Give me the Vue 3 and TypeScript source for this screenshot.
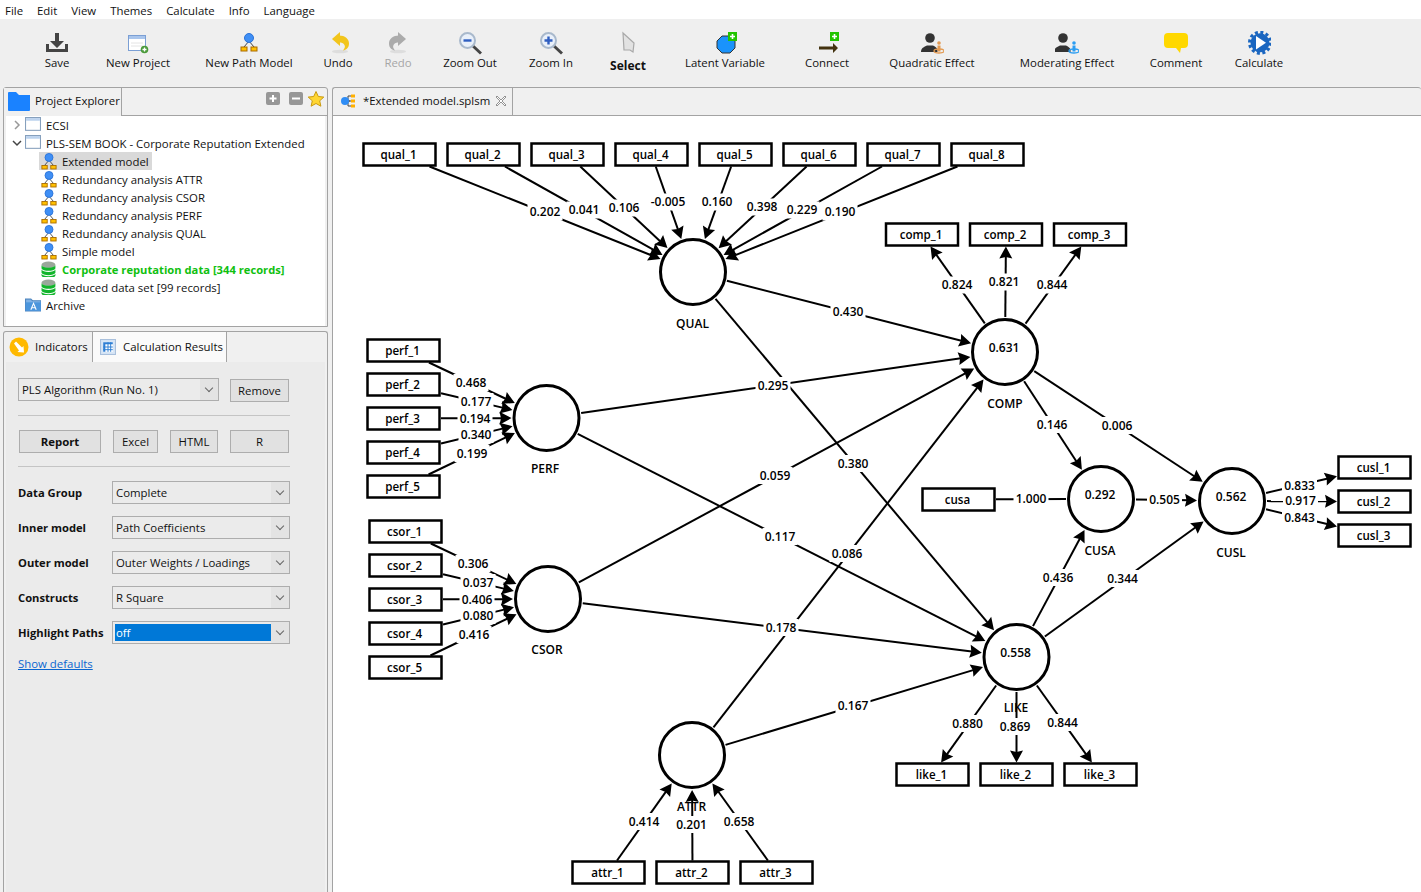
<script setup lang="ts">
import { computed } from 'vue'

interface Node { id: string; x: number; y: number; kind: 'lv' | 'mv'; value?: string; lx?: number; ly?: number }
interface Edge { from: string; to: string; label: string; lx: number; ly: number; arrow?: boolean }

const menu = ['File', 'Edit', 'View', 'Themes', 'Calculate', 'Info', 'Language']

const plus = (x: number, y: number) =>
  `<rect x="${x}" y="${y}" width="9" height="9" fill="#22c400"/><path d="M${x + 4.5} ${y + 2}v5M${x + 2} ${y + 4.5}h5" stroke="#fff" stroke-width="1.6"/>`
const lens = (mark: string) =>
  `<path d="M15 15l8 7.5" stroke="#444" stroke-width="3"/><circle cx="9.5" cy="9.5" r="7.5" fill="#e9f0fa" stroke="#a9b9cc" stroke-width="2"/>${mark}`
const person = (color: string, dx: number) =>
  `<g transform="translate(${dx} 0)"><circle cx="10" cy="7" r="4.8" fill="#333"/><path d="M1 21c0-4 3-5 6-6.5h6c2 1 4 2 4.5 4v2.500z" fill="#333"/></g>` +
  `<ellipse cx="19" cy="20" rx="5" ry="2" fill="none" stroke="${color}" stroke-width="1.300"/><circle cx="19" cy="12" r="1.800" fill="${color}"/><path d="M17.500 14.500h3v6h-3z" fill="${color}"/>`
const arrowBack = (fill: string) =>
  `<ellipse cx="14" cy="20.500" rx="8" ry="1.800" fill="#ddd"/><path d="M13 4.500c6 0 10 3.500 10 8s-3 6.500-6 7c1.500-2 2.500-3.500 1.500-5.500s-3-2.500-5.500-2.500z" fill="${fill}"/><path d="M6 8l8-7v14z" fill="${fill}"/>`

const icons: Record<string, string> = {
  save: '<path d="M10 2h4v8h5l-7 7-7-7h5z" fill="#444"/><path d="M1 13h3v5h16v-5h3v8H1z" fill="#444"/>',
  project: '<rect x="2.500" y="4.500" width="17" height="15" fill="#fff" stroke="#7b9fd4"/><rect x="3" y="5" width="16" height="3" fill="#a9c5ec"/><path d="M5 12h12M5 15h12" stroke="#e4e4e4"/><circle cx="18.500" cy="18.500" r="3.800" fill="#4a9a3a"/><path d="M18.500 16.500v4M16.500 18.500h4" stroke="#fff" stroke-width="1.300"/>',
  model: '<path d="M12 10L7 16M12 10l5 6" stroke="#444"/><circle cx="12" cy="7" r="4.500" fill="#3f8ff5" stroke="#2a72d8"/><rect x="4" y="16" width="6" height="4" fill="#ffc000" stroke="#a96b00"/><rect x="14" y="16" width="6" height="4" fill="#ffc000" stroke="#a96b00"/>',
  undo: arrowBack('#f2c51c'),
  redo: `<g transform="translate(26 0) scale(-1 1)">${arrowBack('#ababab')}</g>`,
  zoomOut: lens('<path d="M5.500 9.500h8" stroke="#2f5ec0" stroke-width="2.400"/>'),
  zoomIn: lens('<path d="M5.500 9.500h8M9.500 5.500v8" stroke="#2f5ec0" stroke-width="2.400"/>'),
  select: '<path d="M7 2l11 10-1 9-3-2H8z" fill="#e2e2e2" stroke="#a8a8a8" stroke-width="1.200"/>',
  latent: `<path d="M9 5h8l5 5v7l-5 5H9l-5-5v-7z" fill="#1a93fb" stroke="#333"/>${plus(15, 1)}`,
  connect: `<path d="M4 15.500h14V12l5 5-5 5v-3.500H4z" fill="#43320f"/>${plus(15, 1)}`,
  quadratic: person('#e39a52', 0),
  moderating: person('#2b9df2', -2),
  comment: '<path d="M4 2h16a4 4 0 014 4v7a4 4 0 01-4 4h-3l-1 5-4-5H4a4 4 0 01-4-4V6a4 4 0 014-4z" fill="#ffd800"/>',
  calculate: '<circle cx="13" cy="11.700" r="10.500" fill="none" stroke="#1a66c0" stroke-width="3" stroke-dasharray="3 2.500"/><circle cx="13" cy="11.700" r="9.500" fill="#1a66c0"/><path d="M9 5l10 6.700-10 6.700z" fill="#fff"/>',
  folder: '<path d="M0 2a1 1 0 011-1h7l3 3h11v15a1 1 0 01-1 1H1a1 1 0 01-1-1z" fill="#1a82ff"/>',
  window: '<rect x=".5" y=".5" width="14" height="12" fill="#fff" stroke="#86a0bd"/><rect x="1" y="1" width="13" height="2.500" fill="#bcd3ee"/>',
  db: '<ellipse cx="7" cy="3.500" rx="6.500" ry="3" fill="#9aa79a"/><path d="M.5 4c1 3 12 3 13 0v3c-1 3-12 3-13 0zM.5 8c1 3 12 3 13 0v3c-1 3-12 3-13 0zM.5 12c1 3 12 3 13 0v1.500c-1 3.500-12 3.500-13 0z" fill="#12b52c"/>',
  archive: '<path d="M.5 2h5l1.500 1.500h8V13H.5z" fill="#7fb2e6" stroke="#4f86c0"/><rect x=".5" y="5" width="15" height="8" fill="#4b95dc"/><path d="M5.500 12l2.500-6 2.500 6M6.500 10h3" fill="none" stroke="#fff"/>',
  indicators: '<circle cx="10" cy="10" r="9.500" fill="#ffb900"/><path d="M5 6.500L7 4.500l6 6 1.500-1.500.5 6.500-6.500-.5 1.500-1.500z" fill="#fff"/>',
  table: '<rect x=".5" y=".5" width="14" height="14" fill="#d8e6f6" stroke="#a9c0dc"/><path d="M3 3h9v9H3z" fill="#fff"/><path d="M3 3h9v2H3zM3 3h2v9H3z" fill="#2f7fd4"/><path d="M3 7.500h9M3 10h9M7.500 3v9M10 3v9" stroke="#2f7fd4" stroke-width=".9"/>',
  star: '<path d="M8 .5l2.300 5 5.500.6-4.100 3.700 1.200 5.400L8 12.500l-4.900 2.700 1.200-5.400L.2 6.100l5.500-.6z" fill="#ffd633" stroke="#c99a10"/>',
  addBtn: '<rect width="14" height="13" rx="2" fill="#979797"/><path d="M7 3v7M3.500 6.500h7" stroke="#fff" stroke-width="2"/>',
  minusBtn: '<rect width="14" height="13" rx="2" fill="#979797"/><path d="M3 6.500h8" stroke="#fff" stroke-width="2"/>',
  modelTab: '<path d="M4 8h6M8 3h4M8 8h4M8 13h4M8 3v10" stroke="#444"/><circle cx="5" cy="8" r="4" fill="#2f8df5"/><rect x="11" y="1.500" width="4" height="3" fill="#ffb000"/><rect x="11" y="6.500" width="4" height="3" fill="#ffb000"/><rect x="11" y="11.500" width="4" height="3" fill="#ffb000"/>',
}

const tools = [
  { label: 'Save', icon: 'save' },
  { label: 'New Project', icon: 'project' },
  { label: 'New Path Model', icon: 'model' },
  { label: 'Undo', icon: 'undo' },
  { label: 'Redo', icon: 'redo', off: true },
  { label: 'Zoom Out', icon: 'zoomOut' },
  { label: 'Zoom In', icon: 'zoomIn' },
  { label: 'Select', icon: 'select', strong: true },
  { label: 'Latent Variable', icon: 'latent' },
  { label: 'Connect', icon: 'connect' },
  { label: 'Quadratic Effect', icon: 'quadratic' },
  { label: 'Moderating Effect', icon: 'moderating' },
  { label: 'Comment', icon: 'comment' },
  { label: 'Calculate', icon: 'calculate' },
]

const tree = [
  { label: 'ECSI', icon: 'window', root: true, chev: 'closed' },
  { label: 'PLS-SEM BOOK - Corporate Reputation Extended', icon: 'window', root: true, chev: 'open' },
  { label: 'Extended model', icon: 'model', selected: true },
  { label: 'Redundancy analysis ATTR', icon: 'model' },
  { label: 'Redundancy analysis CSOR', icon: 'model' },
  { label: 'Redundancy analysis PERF', icon: 'model' },
  { label: 'Redundancy analysis QUAL', icon: 'model' },
  { label: 'Simple model', icon: 'model' },
  { label: 'Corporate reputation data [344 records]', icon: 'db', active: true },
  { label: 'Reduced data set [99 records]', icon: 'db' },
  { label: 'Archive', icon: 'archive', root: true },
]

const formRows = [
  { label: 'Data Group', value: 'Complete' },
  { label: 'Inner model', value: 'Path Coefficients' },
  { label: 'Outer model', value: 'Outer Weights / Loadings' },
  { label: 'Constructs', value: 'R Square' },
  { label: 'Highlight Paths', value: 'off', picked: true },
]

const nodes: Node[] = [
  { id: 'QUAL', x: 693, y: 272, kind: 'lv', lx: 692.5, ly: 323.5 },
  { id: 'PERF', x: 546.5, y: 418, kind: 'lv', lx: 545, ly: 469 },
  { id: 'CSOR', x: 548, y: 599, kind: 'lv', lx: 547, ly: 650 },
  { id: 'COMP', x: 1005, y: 352, kind: 'lv', value: '0.631', lx: 1005, ly: 403.5 },
  { id: 'CUSA', x: 1101, y: 499, kind: 'lv', value: '0.292', lx: 1100, ly: 550.5 },
  { id: 'CUSL', x: 1232, y: 501, kind: 'lv', value: '0.562', lx: 1231, ly: 552.5 },
  { id: 'LIKE', x: 1016.5, y: 657, kind: 'lv', value: '0.558', lx: 1016, ly: 708 },
  { id: 'ATTR', x: 692, y: 755, kind: 'lv', lx: 691.500, ly: 806.5 },
]

const addRow = (prefix: string, xs: number[], ys: number[]) => {
  const many = Math.max(xs.length, ys.length)
  for (let i = 0; i < many; i++) {
    nodes.push({ id: `${prefix}_${i + 1}`, x: xs[xs.length > 1 ? i : 0], y: ys[ys.length > 1 ? i : 0], kind: 'mv' })
  }
}
addRow('qual', [399.5, 483.5, 567.5, 651.5, 735.5, 819.5, 903.5, 987.5], [154.5])
addRow('comp', [922, 1006, 1090], [234.5])
addRow('perf', [403.5], [350.5, 384.5, 418.5, 452.5, 486.5])
addRow('csor', [405.5], [531.5, 565.5, 599.5, 633.5, 667.5])
addRow('cusl', [1374.5], [467.5, 501.5, 535.5])
addRow('like', [932.5, 1016.5, 1100.5], [774.5])
addRow('attr', [608.5, 692.5, 776.5], [872.5])
nodes.push({ id: 'cusa', x: 958.5, y: 499.5, kind: 'mv' })

const e = (from: string, to: string, label: string, lx: number, ly: number, arrow = true): Edge =>
  ({ from, to, label, lx, ly, arrow })

const edges: Edge[] = [
  e('qual_1', 'QUAL', '0.202', 545, 212),
  e('qual_2', 'QUAL', '0.041', 584, 210),
  e('qual_3', 'QUAL', '0.106', 624, 208),
  e('qual_4', 'QUAL', '-0.005', 668, 202),
  e('qual_5', 'QUAL', '0.160', 717, 202),
  e('qual_6', 'QUAL', '0.398', 762, 207),
  e('qual_7', 'QUAL', '0.229', 802, 210),
  e('qual_8', 'QUAL', '0.190', 840, 212),
  e('COMP', 'comp_1', '0.824', 957, 285),
  e('COMP', 'comp_2', '0.821', 1004, 282),
  e('COMP', 'comp_3', '0.844', 1052, 285),
  e('perf_1', 'PERF', '0.468', 471, 382.5),
  e('perf_2', 'PERF', '0.177', 476, 401.5),
  e('perf_3', 'PERF', '0.194', 475, 418.5),
  e('perf_4', 'PERF', '0.340', 476, 434.5),
  e('perf_5', 'PERF', '0.199', 472, 453.5),
  e('csor_1', 'CSOR', '0.306', 473, 563.5),
  e('csor_2', 'CSOR', '0.037', 478, 582.5),
  e('csor_3', 'CSOR', '0.406', 477, 599.5),
  e('csor_4', 'CSOR', '0.080', 478, 615.5),
  e('csor_5', 'CSOR', '0.416', 474, 634.5),
  e('QUAL', 'COMP', '0.430', 848, 311.5),
  e('QUAL', 'LIKE', '0.380', 853, 463.5),
  e('PERF', 'COMP', '0.295', 773, 385.5),
  e('PERF', 'LIKE', '0.117', 780, 536.5),
  e('CSOR', 'COMP', '0.059', 775, 475.5),
  e('CSOR', 'LIKE', '0.178', 781, 627.5),
  e('ATTR', 'COMP', '0.086', 847, 553.5),
  e('ATTR', 'LIKE', '0.167', 853, 705.5),
  e('COMP', 'CUSA', '0.146', 1052, 424.5),
  e('COMP', 'CUSL', '0.006', 1117, 425.5),
  e('cusa', 'CUSA', '1.000', 1031, 498.5, false),
  e('CUSA', 'CUSL', '0.505', 1164.5, 499.5),
  e('LIKE', 'CUSA', '0.436', 1058, 577.5),
  e('LIKE', 'CUSL', '0.344', 1122.5, 578.5),
  e('CUSL', 'cusl_1', '0.833', 1299.5, 485.5),
  e('CUSL', 'cusl_2', '0.917', 1300.5, 500.5),
  e('CUSL', 'cusl_3', '0.843', 1299.5, 517.5),
  e('LIKE', 'like_1', '0.880', 967.5, 723.5),
  e('LIKE', 'like_2', '0.869', 1015, 726.5),
  e('LIKE', 'like_3', '0.844', 1062.5, 722.5),
  e('attr_1', 'ATTR', '0.414', 644, 821.5),
  e('attr_2', 'ATTR', '0.201', 691.5, 824.5),
  e('attr_3', 'ATTR', '0.658', 739, 821.5),
]

const byId = new Map(nodes.map((n) => [n.id, n]))

// distance from a node's centre to its border along direction (ux, uy)
function reach(n: Node, ux: number, uy: number) {
  if (n.kind === 'lv') return 35
  const tx = ux === 0 ? Infinity : 37.5 / Math.abs(ux)
  const ty = uy === 0 ? Infinity : 12 / Math.abs(uy)
  return Math.min(tx, ty)
}

const drawn = computed(() =>
  edges.map((edge) => {
    const a = byId.get(edge.from)!
    const b = byId.get(edge.to)!
    const len = Math.hypot(b.x - a.x, b.y - a.y)
    const ux = (b.x - a.x) / len
    const uy = (b.y - a.y) / len
    const ra = reach(a, ux, uy)
    const rb = reach(b, ux, uy)
    const tipX = b.x - ux * rb
    const tipY = b.y - uy * rb
    const backX = tipX - ux * 12
    const backY = tipY - uy * 12
    const points = [
      [tipX, tipY],
      [backX - uy * 6.5, backY + ux * 6.5],
      [tipX - ux * 10.5, tipY - uy * 10.5],
      [backX + uy * 6.5, backY - ux * 6.5],
    ]
      .map((p) => p.map((v) => v.toFixed(1)).join(','))
      .join(' ')
    return {
      key: `${edge.from}-${edge.to}`,
      x1: a.x + ux * ra,
      y1: a.y + uy * ra,
      x2: edge.arrow ? tipX - ux * 6 : tipX,
      y2: edge.arrow ? tipY - uy * 6 : tipY,
      points: edge.arrow ? points : '',
      label: edge.label,
      lx: edge.lx,
      ly: edge.ly,
      w: edge.label.length > 5 ? 39 : 35,
    }
  }),
)
</script>

<template>
  <div class="app">
    <nav class="menu">
      <span v-for="item in menu" :key="item">{{ item }}</span>
    </nav>

    <div class="toolbar">
      <div v-for="tool in tools" :key="tool.label" class="tool" :class="{ off: tool.off, strong: tool.strong }">
        <svg width="24" height="24" viewBox="0 0 24 24" v-html="icons[tool.icon]"></svg>
        <span>{{ tool.label }}</span>
      </div>
    </div>

    <div class="main">
      <aside class="left">
        <section class="panel explorer">
          <header class="tabs">
            <div class="tab tab-first">
              <svg width="22" height="20" viewBox="0 0 22 20" v-html="icons.folder"></svg>
              <span>Project Explorer</span>
            </div>
            <div class="tab-actions">
              <svg width="14" height="13" viewBox="0 0 14 13" v-html="icons.addBtn"></svg>
              <svg width="14" height="13" viewBox="0 0 14 13" v-html="icons.minusBtn"></svg>
              <svg class="star" width="16" height="16" viewBox="0 0 16 16" v-html="icons.star"></svg>
            </div>
          </header>
          <div class="tree">
            <div v-for="row in tree" :key="row.label" class="tree-row" :class="{ root: row.root }">
              <svg v-if="row.chev" class="chev" width="10" height="10" viewBox="0 0 10 10">
                <path :d="row.chev === 'open' ? 'M1 3l4 4 4-4' : 'M3 1l4 4-4 4'" fill="none" :stroke="row.chev === 'open' ? '#444' : '#999'" stroke-width="1.500" />
              </svg>
              <div class="tree-item" :class="{ selected: row.selected, active: row.active }">
                <svg v-if="row.icon === 'model'" width="16" height="18" viewBox="3 1 18 20" v-html="icons.model"></svg>
                <svg v-else width="16" height="16" viewBox="0 0 15 15" v-html="icons[row.icon]"></svg>
                <span>{{ row.label }}</span>
              </div>
            </div>
          </div>
        </section>

        <section class="panel results">
          <header class="tabs tabs-low">
            <div class="tab tab-plain">
              <svg width="20" height="20" viewBox="0 0 20 20" v-html="icons.indicators"></svg>
              <span>Indicators</span>
            </div>
            <div class="tab tab-on">
              <svg width="16" height="16" viewBox="0 0 15 15" v-html="icons.table"></svg>
              <span>Calculation Results</span>
            </div>
          </header>
          <div class="form">
            <div class="run-row">
              <div class="select run"><span>PLS Algorithm (Run No. 1)</span><i class="caret"></i></div>
              <button class="btn remove">Remove</button>
            </div>
            <hr />
            <div class="btn-row">
              <button class="btn bold">Report</button>
              <button class="btn">Excel</button>
              <button class="btn">HTML</button>
              <button class="btn">R</button>
            </div>
            <hr />
            <div class="fields">
              <div v-for="row in formRows" :key="row.label" class="field">
                <label>{{ row.label }}</label>
                <div class="select grow">
                  <span :class="{ picked: row.picked }">{{ row.value }}</span><i class="caret"></i>
                </div>
              </div>
            </div>
            <a class="defaults">Show defaults</a>
          </div>
        </section>
      </aside>

      <section class="panel editor">
        <header class="tabs">
          <div class="tab tab-file">
            <svg width="16" height="16" viewBox="0 0 16 16" v-html="icons.modelTab"></svg>
            <span>*Extended model.splsm</span>
            <svg class="close" width="12" height="12" viewBox="0 0 12 12">
              <path d="M2 1l4 4 4-4 1 1-4 4 4 4-1 1-4-4-4 4-1-1 4-4-4-4z" fill="#fff" stroke="#777" stroke-width=".8" />
            </svg>
          </div>
        </header>
        <div class="canvas">
          <svg class="diagram" width="1089" height="776" viewBox="333 116 1089 776">
            <line v-for="d in drawn" :key="d.key" :x1="d.x1" :y1="d.y1" :x2="d.x2" :y2="d.y2" class="edge" />
            <polygon v-for="d in drawn" :key="d.key + '-a'" :points="d.points" class="head" />
            <template v-for="n in nodes" :key="n.id">
              <template v-if="n.kind === 'mv'">
                <rect :x="n.x - 36" :y="n.y - 11" width="72" height="22" class="box" />
                <text :x="n.x - 1" :y="n.y + 4" class="t-mv">{{ n.id }}</text>
              </template>
              <template v-else>
                <circle :cx="n.x" :cy="n.y" r="32.5" class="lv" />
                <text v-if="n.value" :x="n.x - 1" :y="n.y" class="t-num">{{ n.value }}</text>
                <text :x="n.lx" :y="(n.ly ?? 0) + 4" class="t-lv">{{ n.id }}</text>
              </template>
            </template>
            <g v-for="d in drawn" :key="d.key + '-l'">
              <rect :x="d.lx - d.w / 2" :y="d.ly - 8.5" :width="d.w" height="17" fill="#fff" />
              <text :x="d.lx" :y="d.ly + 4" class="t-num">{{ d.label }}</text>
            </g>
          </svg>
        </div>
      </section>
    </div>
  </div>
</template>

<style>
html,
body {
  margin: 0;
  overflow: hidden;
  background: #f0f0f0;
}
</style>

<style scoped>
.app {
  width: 1421px;
  height: 892px;
  display: flex;
  flex-direction: column;
  overflow: hidden;
  font: 11.4px/15px "Open Sans", "Noto Sans", sans-serif;
  color: #111;
}

.app svg {
  flex: none;
}

.menu {
  height: 19px;
  background: #fff;
  display: flex;
  gap: 14px;
  padding-left: 5px;
  line-height: 22px;
}

.toolbar {
  height: 67px;
  box-sizing: border-box;
  background: #efefef;
  padding: 12px 0 0 24px;
  display: grid;
  grid-template-columns: 66px 96px 126px 52px 68px 76px 86px 68px 126px 78px 132px 138px 80px 86px;
}

.tool {
  display: flex;
  flex-direction: column;
  align-items: center;
  white-space: nowrap;
}

.tool.off {
  color: #a6a6a6;
}

.tool.strong span {
  font-weight: 700;
  font-size: 12px;
  margin-top: 3px;
}

.main {
  flex: 1;
  min-height: 0;
  display: flex;
  gap: 4px;
  padding: 1px 0 0 3px;
}

.left {
  width: 325px;
  display: flex;
  flex-direction: column;
  gap: 4px;
}

.panel {
  box-sizing: border-box;
  border: 1px solid #a3a3a3;
  border-radius: 3px 3px 0 0;
  background: #f0f0f0;
}

.explorer {
  height: 242px;
}

.results {
  flex: 1;
  border-bottom: 0;
}

.tabs {
  height: 28px;
  box-sizing: border-box;
  display: flex;
  border-bottom: 1px solid #a3a3a3;
}

.tabs-low {
  height: 30px;
  border-bottom: 0;
}

.tab {
  display: flex;
  align-items: center;
  white-space: nowrap;
  border-right: 1px solid #a3a3a3;
  padding-bottom: 3px;
  box-sizing: border-box;
}

.tabs-low .tab {
  padding-bottom: 1px;
}

.tab-first {
  width: 118px;
  padding-left: 4px;
  gap: 5px;
  height: 28px;
  background: #f0f0f0;
}

.tab-actions {
  margin-left: auto;
  padding: 4px 3px 0 0;
  display: flex;
  gap: 9px;
  align-items: flex-start;
}

.star {
  margin-left: -4px;
  margin-top: -1px;
}

.tab-plain {
  width: 89px;
  padding-left: 5px;
  gap: 6px;
}

.tab-on {
  width: 134px;
  padding-left: 7px;
  gap: 7px;
  background: #fafafa;
}

.tab-file {
  width: 180px;
  padding-left: 7px;
  gap: 7px;
  height: 28px;
}

.close {
  margin-left: -2px;
}

.tree {
  margin: 0 2px;
  height: 210px;
  background: #fff;
}

.tree-row {
  height: 18px;
  display: flex;
  align-items: center;
  padding-left: 33px;
  position: relative;
}

.tree-row.root {
  padding-left: 17px;
}

.chev {
  position: absolute;
  left: 6px;
  top: 4px;
}

.tree-item {
  height: 18px;
  display: flex;
  align-items: center;
  gap: 5px;
  padding: 0 3px 0 2px;
  white-space: nowrap;
}

.tree-item.selected {
  background: #d9d9d9;
}

.tree-item.active {
  color: #10c010;
  font-weight: 700;
  font-size: 11.2px;
}

.form {
  margin: 0 2px;
  height: 530px;
  box-sizing: border-box;
  padding: 16px 35px 0 12px;
  background: #ebebeb;
}

.run-row {
  display: flex;
  align-items: flex-start;
  gap: 11px;
}

.select {
  height: 23px;
  box-sizing: border-box;
  border: 1px solid #adadad;
  background: #ebebeb;
  display: flex;
  align-items: center;
}

.select span {
  flex: 1;
  padding-left: 3px;
  line-height: 17px;
}

.select span.picked {
  background: #0078d7;
  color: #fff;
  margin: 0 0 0 2px;
  padding-left: 1px;
}

.run {
  width: 201px;
}

.grow {
  flex: 1;
}

.caret {
  width: 18px;
  height: 21px;
  position: relative;
  background: #e3e3e3;
  flex: none;
}

.caret::after {
  content: "";
  position: absolute;
  left: 6px;
  top: 6px;
  width: 5px;
  height: 5px;
  border: solid #666;
  border-width: 0 1px 1px 0;
  transform: rotate(45deg);
}

.btn {
  height: 23px;
  box-sizing: border-box;
  border: 1px solid #adadad;
  background: #e1e1e1;
  padding: 0;
  font: inherit;
  color: #111;
}

.btn.bold {
  font-weight: 700;
}

.remove {
  width: 59px;
  margin-top: 1px;
}

hr {
  margin: 13px 0;
  border: 0;
  border-top: 1px solid #c4c4c4;
  height: 0;
}

.run-row + hr {
  margin-bottom: 14px;
}

.btn-row {
  display: grid;
  grid-template-columns: 82px 45px 48px 59px;
  column-gap: 12px;
  padding-left: 1px;
}

.fields {
  display: flex;
  flex-direction: column;
  gap: 12px;
  margin-top: 14px;
}

.field {
  display: flex;
  align-items: center;
}

.field label {
  width: 94px;
  font-weight: 700;
  font-size: 11.2px;
}

.defaults {
  display: inline-block;
  margin-top: 12px;
  color: #0a66d0;
  text-decoration: underline;
}

.editor {
  flex: 1;
  min-width: 0;
  border-right: 0;
  border-bottom: 0;
}

.canvas {
  height: 776px;
  background: #fff;
}

.diagram {
  display: block;
}

.edge {
  stroke: #000;
  stroke-width: 2;
}

.head {
  fill: #000;
}

.box {
  fill: #fff;
  stroke: #000;
  stroke-width: 2.5;
}

.lv {
  fill: #fff;
  stroke: #000;
  stroke-width: 3;
}

text {
  font-family: "Open Sans", "Noto Sans", sans-serif;
  font-size: 12px;
  text-anchor: middle;
  fill: #000;
}

.t-mv {
  font-weight: 600;
  font-size: 11.6px;
}

.t-num,
.t-lv {
  font-weight: 600;
}
</style>
